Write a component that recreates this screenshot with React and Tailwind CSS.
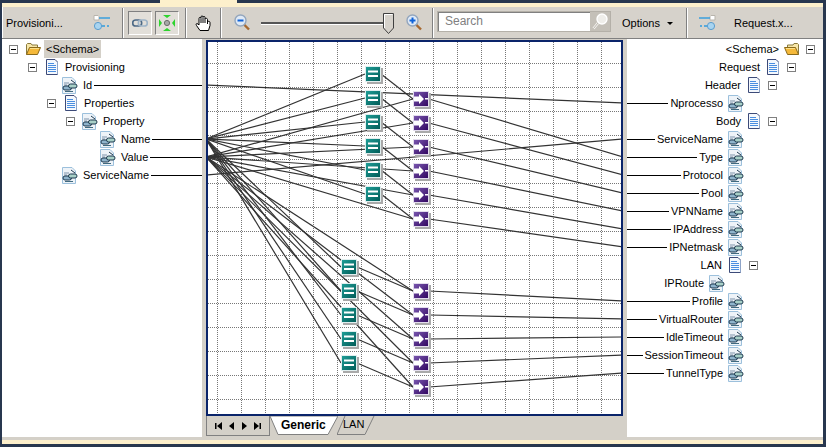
const font = { fontFamily: '"Liberation Sans", Arial, sans-serif' };

const leftRows = [
  { label: "<Schema>", type: "folder", box: 7, selected: true },
  { label: "Provisioning", type: "doc", box: 26 },
  { label: "Id", type: "elem", pad: 60, line: true },
  { label: "Properties", type: "doc", box: 45 },
  { label: "Property", type: "elem", box: 64 },
  { label: "Name", type: "elem", pad: 98, line: true },
  { label: "Value", type: "elem", pad: 98, line: true },
  { label: "ServiceName", type: "elem", pad: 60, line: true },
];

const rightRows = [
  { label: "<Schema>", type: "folder", pad: 8, box: true },
  { label: "Request", type: "doc", pad: 27, box: true },
  { label: "Header", type: "doc", pad: 46, box: true },
  { label: "Nprocesso", type: "elem", pad: 79, line: true },
  { label: "Body", type: "doc", pad: 46, box: true },
  { label: "ServiceName", type: "elem", pad: 79, line: true },
  { label: "Type", type: "elem", pad: 79, line: true },
  { label: "Protocol", type: "elem", pad: 79, line: true },
  { label: "Pool", type: "elem", pad: 79, line: true },
  { label: "VPNName", type: "elem", pad: 79, line: true },
  { label: "IPAddress", type: "elem", pad: 79, line: true },
  { label: "IPNetmask", type: "elem", pad: 79, line: true },
  { label: "LAN", type: "doc", pad: 65, box: true },
  { label: "IPRoute", type: "elem", pad: 98 },
  { label: "Profile", type: "elem", pad: 79, line: true },
  { label: "VirtualRouter", type: "elem", pad: 79, line: true },
  { label: "IdleTimeout", type: "elem", pad: 79, line: true },
  { label: "SessionTimeout", type: "elem", pad: 79, line: true },
  { label: "TunnelType", type: "elem", pad: 79, line: true },
];

// diagram coordinates are page coordinates, the svg viewBox is offset to match
const tealTop = [74, 98, 122, 146, 170, 194];
const purpleTop = [99, 123, 147, 171, 195, 219];
const topTargets = [157, 175, 193, 211, 229, 247];
const tealLow = [267, 291, 315, 339, 363];
const purpleLow = [291, 315, 339, 363, 387];
const lowTargets = [301, 319, 337, 355, 373];

function Minus() {
  return (
    <span className="flex h-[9px] w-[9px] shrink-0 items-center justify-center border border-[#808080] bg-white">
      <span className="h-px w-[5px] bg-black" />
    </span>
  );
}

function FolderIcon({ flip }) {
  return (
    <svg width="16" height="14" viewBox="0 0 16 14" className={flip ? "shrink-0 -scale-x-100" : "shrink-0"}>
      <path d="M1.5 12.5V2.5L2.5 1.5H6L7 3H12.5V5" fill="#f6e6a8" stroke="#8a7a3c" />
      <path d="M1.5 12.5L4.5 5.5H15.5L12.5 12.5Z" fill="#f5b93a" stroke="#8a6a1c" />
      <path d="M5 6.5H14" stroke="#fbe08a" />
    </svg>
  );
}

function DocIcon() {
  return (
    <svg width="14" height="17" viewBox="0 0 14 17" className="shrink-0">
      <path d="M1.5 .5H10L12.5 3V15.5H1.5Z" fill="#f4f8fd" stroke="#3c4a78" />
      <path d="M12.5 3V15.5" stroke="#8ea4c8" />
      <path d="M3 4.5H9M3 6.5H11M3 8.5H11M3 10.5H11M3 12.5H11" stroke="#4a8ee0" />
    </svg>
  );
}

function ElemIcon() {
  return (
    <svg width="16" height="17" viewBox="0 0 16 17" className="shrink-0">
      <path d="M.5 .5H10L13.5 4V16.5H.5Z" fill="#eef3f8" stroke="#9cc0dc" />
      <path d="M2 6H7M2 8H5" stroke="#7f93aa" />
      <rect x="1" y="9" width="8.5" height="4" rx="2" fill="#8fb4cc" stroke="#1f3a50" />
      <rect x="6.5" y="7" width="8.5" height="4" rx="2" fill="#a8d0c8" stroke="#1f3a50" />
      <path d="M3 14.5H11" stroke="#3f6a80" />
      <path d="M9 3L13 6" stroke="#1f3a50" />
    </svg>
  );
}

function RowIcon({ type, flip }) {
  if (type === "folder") return <FolderIcon flip={flip} />;
  if (type === "doc") return <DocIcon />;
  return <ElemIcon />;
}

function LeftRow({ row }) {
  return (
    <div className="flex h-[18px] items-center" style={{ paddingLeft: row.box ?? row.pad }}>
      {row.box !== undefined && <Minus />}
      <span className={row.box !== undefined ? "ml-[7px] flex w-4 justify-center" : "flex w-4 justify-center"}>
        <RowIcon type={row.type} />
      </span>
      <span className={row.selected ? "ml-[3px] flex h-[18px] items-center bg-[#d4d0c8] px-[2px]" : "ml-[5px]"}>{row.label}</span>
      {row.line && <span className="ml-[2px] h-px flex-1 bg-black" />}
    </div>
  );
}

function RightRow({ row }) {
  return (
    <div className="flex h-[18px] items-center justify-end" style={{ paddingRight: row.pad }}>
      {row.line && <span className="mr-[2px] h-px flex-1 bg-black" />}
      <span className="mr-[5px]">{row.label}</span>
      <span className="flex w-4 justify-center">
        <RowIcon type={row.type} flip />
      </span>
      {row.box && <span className="ml-[6px]"><Minus /></span>}
    </div>
  );
}

function Separator() {
  return <span className="block h-[30px] w-[2px] shrink-0 border-r border-l border-r-white border-l-[#808080]" />;
}

function MapIcon({ flip }) {
  return (
    <svg width="18" height="16" viewBox="0 0 18 16" className={flip ? "-scale-x-100" : ""}>
      <path d="M1 .5H5L6 1.5V5H1Z" fill="#fff" stroke="#b8b4ac" />
      <path d="M6 3H17" stroke="#2f9ce0" strokeWidth="1.4" />
      <circle cx="5" cy="11" r="3.6" fill="#a8d4f0" stroke="#5b9ccc" />
      <path d="M9 11H16" stroke="#2f9ce0" strokeWidth="1.4" strokeDasharray="3 2" />
    </svg>
  );
}

function LinkIcon() {
  return (
    <svg width="16" height="10" viewBox="0 0 16 10">
      <rect x=".7" y="2" width="9" height="6" rx="3" fill="none" stroke="#4d6a86" strokeWidth="1.6" />
      <rect x="6.3" y="2" width="9" height="6" rx="3" fill="none" stroke="#9fb5c8" strokeWidth="1.6" />
    </svg>
  );
}

function FitIcon() {
  return (
    <svg width="16" height="16" viewBox="0 0 16 16">
      <path d="M4 0H12L8 3ZM4 16H12L8 13ZM0 4V12L3 8ZM16 4V12L13 8Z" fill="#2ed42e" />
      <circle cx="8" cy="8" r="2.6" fill="#a8a8a8" stroke="#6c6c6c" />
    </svg>
  );
}

function HandIcon() {
  return (
    <svg width="18" height="18" viewBox="0 0 18 18">
      <path
        d="M6 16.5L2.5 11.5C1.5 10 2.5 9 4 10L5 11V4.5C5 3 7 3 7 4.5V3C7 1.5 9 1.5 9 3V3.5C9 2 11 2 11 3.5V5C11 4 13.5 4 13.5 5.5V8C13.5 7 16 7 16 8.5V11.5L14.5 16.5Z"
        fill="#fff"
        stroke="#000"
      />
      <path d="M7 5V9M9 4V9M11 5V9M13.5 7V10" stroke="#000" />
    </svg>
  );
}

function ZoomIcon({ plus }) {
  return (
    <svg width="16" height="17" viewBox="0 0 16 17">
      <path d="M10 10.5L15 15.5" stroke="#a86a30" strokeWidth="2.4" />
      <circle cx="6.5" cy="6.5" r="5.5" fill="#dfe9f5" stroke="#93a6bd" strokeWidth="1.4" />
      <path d="M3.5 6.5H9.5" stroke="#0f62d8" strokeWidth="2" />
      {plus && <path d="M6.5 3.5V9.5" stroke="#0f62d8" strokeWidth="2" />}
    </svg>
  );
}

function SearchGlass() {
  return (
    <svg width="16" height="17" viewBox="0 0 16 17">
      <path d="M6 10L1.5 15.5" stroke="#f4f2ee" strokeWidth="2.6" />
      <path d="M6 10L1.5 15.5" stroke="#a8a49c" strokeWidth=".8" />
      <circle cx="10" cy="6" r="5" fill="#efeeea" stroke="#fff" strokeWidth="1.4" />
    </svg>
  );
}

function Toolbar() {
  return (
    <div className="flex h-[31px] items-center border-l border-white bg-[#d6d2cb]">
      <span className="ml-[3px] w-[56px] whitespace-nowrap text-black">Provisioni...</span>
      <span className="ml-[31px] flex"><MapIcon /></span>
      <span className="ml-[11px]"><Separator /></span>
      <button className="ml-[4px] flex h-6 w-6 items-center justify-center border border-t-[#808080] border-r-white border-b-white border-l-[#808080] bg-[#e2dfd9]">
        <LinkIcon />
      </button>
      <button className="ml-[3px] flex h-6 w-6 items-center justify-center border border-t-[#808080] border-r-white border-b-white border-l-[#808080] bg-[#e2dfd9]">
        <FitIcon />
      </button>
      <span className="ml-[6px]"><Separator /></span>
      <span className="ml-[7px] flex"><HandIcon /></span>
      <span className="ml-[8px]"><Separator /></span>
      <span className="ml-[12px] flex"><ZoomIcon /></span>
      <div className="relative ml-[11px] h-[20px] w-[132px]">
        <span className="absolute top-[9px] left-0 h-[2px] w-[122px] bg-[#555] shadow-[0_1px_0_#fff]" />
        <svg width="11" height="21" viewBox="0 0 11 21" className="absolute top-0 left-[122px]">
          <path d="M.5 .5H10.5V15L5.5 20.5L.5 15Z" fill="#d6d2cb" stroke="#404040" />
          <path d="M1.5 1.5H9.5M1.5 1.5V15" stroke="#fff" />
        </svg>
      </div>
      <span className="ml-[13px] flex"><ZoomIcon plus /></span>
      <span className="ml-[10px]"><Separator /></span>
      <div className="mb-[2px] ml-[3px] flex h-[21px] w-[174px] border border-[#b4b0a8] bg-white">
        <span className="flex-1 border-t border-l border-t-[#808080] border-l-[#808080] pl-[6px] text-[12px] leading-[17px] text-[#808080]">Search</span>
        <span className="flex w-[20px] items-center justify-center bg-[#c4c0b8]"><SearchGlass /></span>
      </div>
      <span className="ml-[11px] w-[37px] whitespace-nowrap text-black">Options</span>
      <span className="mt-[1px] ml-[8px] h-0 w-0 border-x-[3px] border-t-[3px] border-x-transparent border-t-black" />
      <span className="ml-[13px]"><Separator /></span>
      <span className="ml-[10px] flex"><MapIcon flip /></span>
      <span className="ml-[18px] whitespace-nowrap text-black">Request.x...</span>
    </div>
  );
}

function TealNode({ y, x }) {
  return (
    <g transform={`translate(${x} ${y - 8})`}>
      <rect x="2" y="2" width="16" height="16" fill="#a9a9a9" />
      <rect x=".5" y=".5" width="15" height="15" fill="url(#teal)" stroke="#dfeeee" />
      <rect x="3" y="4.5" width="10" height="2" fill="#fff" />
      <rect x="3" y="9" width="10" height="2" fill="#fff" />
    </g>
  );
}

function PurpleNode({ y }) {
  return (
    <g transform={`translate(413 ${y - 8})`}>
      <rect x="2" y="2" width="16" height="16" fill="#a9a9a9" />
      <rect x=".5" y=".5" width="15" height="15" fill="url(#purple)" stroke="#e2dcec" />
      <path d="M1 5.5H6V3L11 8L6 13V10.5H1Z" fill="#fff" />
      <rect x="12" y="7" width="3" height="1.5" fill="#fff" />
    </g>
  );
}

function Wire({ x1, y1, x2, y2 }) {
  return <line x1={x1} y1={y1} x2={x2} y2={y2} stroke="#333" strokeWidth="1.2" />;
}

function Diagram() {
  const gridX = Array.from({ length: 17 }, (_, i) => 217 + i * 24);
  const gridY = Array.from({ length: 15 }, (_, i) => 63 + i * 24);
  return (
    <svg width="413" height="372" viewBox="208 42 413 372" className="block bg-white">
      <defs>
        <linearGradient id="teal" x1="0" y1="0" x2="1" y2="1">
          <stop offset="0" stopColor="#1f9f98" />
          <stop offset="1" stopColor="#005a56" />
        </linearGradient>
        <linearGradient id="purple" x1="0" y1="0" x2="1" y2="1">
          <stop offset="0" stopColor="#7a58b0" />
          <stop offset="1" stopColor="#30045f" />
        </linearGradient>
      </defs>
      {gridX.map((x) => (
        <line key={x} x1={x + 0.5} y1="42" x2={x + 0.5} y2="414" stroke="#777" strokeDasharray="1 1" />
      ))}
      {gridY.map((y) => (
        <line key={y} x1="208" y1={y + 0.5} x2="621" y2={y + 0.5} stroke="#777" strokeDasharray="1 1" />
      ))}
      <Wire x1={206} y1={85} x2={623} y2={103} />
      <Wire x1={206} y1={175} x2={623} y2={139} />
      {tealTop.map((y, i) => (
        <g key={y}>
          <Wire x1={206} y1={139} x2={365} y2={y} />
          <Wire x1={381} y1={y} x2={413} y2={purpleTop[i]} />
          <Wire x1={206} y1={157} x2={413} y2={purpleTop[i]} />
          <Wire x1={429} y1={purpleTop[i]} x2={623} y2={topTargets[i]} />
        </g>
      ))}
      {tealLow.map((y, i) => (
        <g key={y}>
          <Wire x1={206} y1={139} x2={341} y2={y} />
          <Wire x1={357} y1={y} x2={413} y2={purpleLow[i]} />
          <Wire x1={206} y1={157} x2={413} y2={purpleLow[i]} />
          <Wire x1={429} y1={purpleLow[i]} x2={623} y2={lowTargets[i]} />
        </g>
      ))}
      {tealTop.map((y) => <TealNode key={y} x={365} y={y} />)}
      {tealLow.map((y) => <TealNode key={y} x={341} y={y} />)}
      {purpleTop.map((y) => <PurpleNode key={y} y={y} />)}
      {purpleLow.map((y) => <PurpleNode key={y} y={y} />)}
    </svg>
  );
}

function TabBar() {
  return (
    <div className="ml-1 flex h-[21px] items-start">
      <div className="flex h-5 w-[64px] items-center justify-around border-r border-b border-l border-[#808080] px-1">
        <svg width="8" height="8" viewBox="0 0 8 8"><path d="M1 1H2.5V7H1ZM8 0V8L3 4Z" fill="#000" /></svg>
        <svg width="6" height="8" viewBox="0 0 6 8"><path d="M5 0V8L0 4Z" fill="#000" /></svg>
        <svg width="6" height="8" viewBox="0 0 6 8"><path d="M1 0V8L6 4Z" fill="#000" /></svg>
        <svg width="8" height="8" viewBox="0 0 8 8"><path d="M7 1H5.5V7H7ZM0 0V8L5 4Z" fill="#000" /></svg>
      </div>
      <div className="relative h-5 w-[68px]">
        <svg width="68" height="20" viewBox="0 0 68 20" className="absolute inset-0">
          <path d="M0 0L8 18.5H58L68 0Z" fill="#fff" stroke="#808080" />
        </svg>
        <span className="absolute top-0 left-[11px] text-[12px] font-bold">Generic</span>
      </div>
      <div className="relative -ml-[1px] h-5 w-[38px]">
        <svg width="38" height="20" viewBox="0 0 38 20" className="absolute inset-0">
          <path d="M8 0L0 18.5H28L37 0" fill="none" stroke="#808080" />
        </svg>
        <span className="absolute -top-px left-[6px]">LAN</span>
      </div>
    </div>
  );
}

export default function App() {
  return (
    <div className="flex h-[447px] w-[826px] flex-col overflow-hidden bg-[#28374f] text-[11px] leading-[18px] text-black" style={font}>
      <div className="flex h-[3px]">
        <span className="ml-[160px] w-[77px] bg-[#fdf0cc]" />
      </div>
      <div className="mr-[3px] ml-[2px] flex flex-col">
        <div className="h-1 bg-[#fdf0cc]" />
        <Toolbar />
        <div className="h-px bg-[#808080]" />
        <div className="flex h-[398px] bg-white">
          <div className="w-[200px] pt-px">
            {leftRows.map((row) => <LeftRow key={row.label} row={row} />)}
          </div>
          <div className="w-[425px] bg-[#d4d0c8] pt-px">
            <div className="ml-1 w-[417px] border-2 border-[#0a246a]">
              <Diagram />
            </div>
            <TabBar />
          </div>
          <div className="flex-1 pt-px">
            {rightRows.map((row) => <RightRow key={row.label} row={row} />)}
          </div>
        </div>
        <div className="h-[3px] bg-[#d4d0c8]" />
        <div className="h-1 bg-[#fdf0cc]" />
      </div>
    </div>
  );
}
